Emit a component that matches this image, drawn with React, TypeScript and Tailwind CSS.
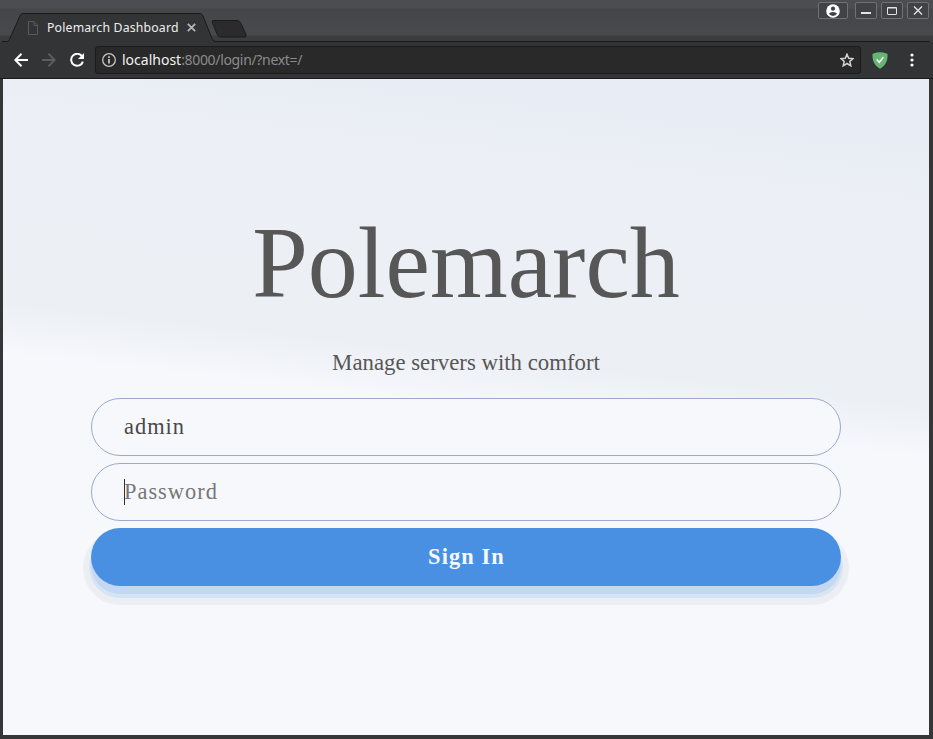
import React from "react";

function TabStrip() {
  return (
    <header className="relative flex h-[42px] shrink-0 items-start justify-between bg-[linear-gradient(180deg,#4c4d50_0,#4c4d50_8px,#454649_9px,#48494c_35px,#3b3c3e_36px,#3b3c3e_40px)]">
      <div className="relative flex h-[42px] w-[216px] items-center pl-[27px] pt-[13px]">
        <svg className="absolute left-0 top-[12px]" width="250" height="30" viewBox="0 0 250 30">
          <path d="M2 29.5H7.5C9.5 28 10 27 11 24L20 4C21 2 21.5 1.5 23 1.5H199C201 1.5 202 2 203 4L211 24C212 27 213 29 216 29.5V30H2Z" fill="#333436" />
          <path d="M2 29.5H7.5C9.5 28 10 27 11 24L20 4C21 2 21.5 1.5 23 1.5H199C201 1.5 202 2 203 4L211 24C212 27 213 29 215 29.5" fill="none" stroke="#19191a" />
          <path d="M214 8.500H237C239 8.500 240 9.500 241 11.500L246 22.500C246.500 24.500 246 25 244 25H221C219 25 218 24 217 22L212.500 11C211.800 9 212 8.500 214 8.500Z" fill="#2b2b2d" stroke="#1b1b1c" />
        </svg>
        <svg className="relative" width="12" height="14" viewBox="0 0 12 14" fill="none" stroke="#5a5a5c">
          <path d="M1.500 .5H7L10.500 4V13.500H1.500ZM7 .5V4.500H10.500" />
        </svg>
        <span className="relative ml-[8px] w-[134px] whitespace-nowrap font-['Noto_Sans',sans-serif] text-[12.300px] leading-[16px] tracking-[0.160px] text-[#eeeeee]">Polemarch Dashboard</span>
        <svg className="relative ml-[6px]" width="9" height="9" viewBox="0 0 9 9" stroke="#b4b4b6" strokeWidth="1.800">
          <path d="M.8 .8L8.200 8.200M8.200 .8L.8 8.200" />
        </svg>
      </div>
      <div className="absolute bottom-0 left-[215px] right-[3px] h-px bg-[#19191a]" />
      <div className="flex gap-[5px] pr-[4px] pt-[2px]">
        <button className="mr-[2px] flex h-[17px] w-[30px] items-center justify-center rounded-[2px] border border-[#707173] bg-[#414245]">
          <svg width="14" height="14" viewBox="0 0 14 14">
            <circle cx="7" cy="7" r="6.800" fill="#fff" />
            <circle cx="7" cy="4.700" r="2.100" fill="#414245" />
            <path d="M2.900 9.800Q4 7.900 7 7.900T11.100 9.800Q9.700 11.900 7 11.900T2.900 9.800Z" fill="#414245" />
          </svg>
        </button>
        <button className="flex h-[17px] w-[22px] items-center justify-center rounded-[2px] border border-[#707173] bg-[#414245]">
          <svg width="12" height="13" viewBox="0 0 12 13"><rect x="1" y="8" width="10" height="2" fill="#e3e3e3" /></svg>
        </button>
        <button className="-ml-px flex h-[17px] w-[22px] items-center justify-center rounded-[2px] border border-[#707173] bg-[#414245]">
          <svg width="12" height="13" viewBox="0 0 12 13"><rect x="1.500" y="3.500" width="9" height="7" rx=".5" fill="none" stroke="#e3e3e3" /><path d="M1 4H11" stroke="#e3e3e3" /></svg>
        </button>
        <button className="-ml-px flex h-[17px] w-[22px] items-center justify-center rounded-[2px] border border-[#707173] bg-[#414245]">
          <svg width="10" height="11" viewBox="0 0 10 11" stroke="#e3e3e3" strokeWidth="1.400"><path d="M1 1.500L9 9.500M9 1.500L1 9.500" /></svg>
        </button>
      </div>
    </header>
  );
}

function Toolbar() {
  return (
    <nav className="flex h-[37px] shrink-0 items-center border-b border-[#19191a] bg-[#333436] pl-[14px] pr-[15px]">
      <svg width="14" height="14" viewBox="0 0 14 14" fill="none" stroke="#fff" strokeWidth="2"><path d="M14 7H1.500M7.500 .8L1.300 7L7.500 13.200" /></svg>
      <svg className="ml-[14px]" width="14" height="14" viewBox="0 0 14 14" fill="none" stroke="#5c5d5f" strokeWidth="2"><path d="M0 7H12.500M6.500 .8L12.700 7L6.500 13.200" /></svg>
      <svg className="ml-[14px]" width="14" height="14" viewBox="0 0 14 14"><path d="M12.200 3.500A6 6 0 1 0 12.900 8.600" fill="none" stroke="#fff" strokeWidth="2" /><path d="M14 0V6H8Z" fill="#fff" /></svg>
      <div className="ml-[11px] flex h-[28px] flex-1 items-center rounded-[3px] border border-[#1b1b1c] bg-[#292929] pl-[6px] pr-[6px]">
        <svg width="14" height="14" viewBox="0 0 14 14"><circle cx="7" cy="7" r="6.300" fill="none" stroke="#c6c6c8" strokeWidth="1.300" /><path d="M7 6V10.500M7 3.300V4.900" stroke="#d5d5d5" strokeWidth="1.600" /></svg>
        <span className="ml-[6px] flex-1 font-['Noto_Sans',sans-serif] text-[14px] leading-[18px] tracking-[-0.330px] text-[#8b8b8d]"><span className="tracking-normal text-[#f1f1f1]">localhost</span>:8000/login/?next=/</span>
        <svg width="14" height="14" viewBox="0 0 14 14" fill="none" stroke="#d2d2d4" strokeWidth="1.500"><path d="M7 1.200L8.700 5.200L13.100 5.600L9.800 8.400L10.800 12.800L7 10.500L3.200 12.800L4.200 8.400L.9 5.600L5.300 5.200Z" /></svg>
      </div>
      <svg className="ml-[11px]" width="16" height="17" viewBox="0 0 16 17"><path d="M8 .3C10.500 .3 13.600 .8 15.500 2C15.700 8.500 14.300 12.800 8 16.700C1.700 12.800 .3 8.500 .5 2C2.400 .8 5.500 .3 8 .3Z" fill="#65b671" /><path d="M4.700 7.500L7.300 10.200L11.300 5.300" fill="none" stroke="#fff" strokeWidth="1.600" /></svg>
      <svg className="ml-[22px] mr-[4px]" width="4" height="14" viewBox="0 0 4 14" fill="#fff"><circle cx="2" cy="2" r="1.600" /><circle cx="2" cy="7" r="1.600" /><circle cx="2" cy="12" r="1.600" /></svg>
    </nav>
  );
}

export default function App() {
  return (
    <div className="flex h-[739px] w-[933px] flex-col overflow-hidden bg-[#353638]">
      <TabStrip />
      <Toolbar />
      <div className="flex h-[660px] border-b-[4px] border-l-[3px] border-r-[4px] border-[#353638]">
        <main className="flex h-[656px] w-[926px] flex-col items-center bg-[linear-gradient(186.5deg,#e8edf5_0%,#e8edf5_9%,#eceff5_17%,#eceff4_43%,#f6f8fc_50%)] font-['Liberation_Serif',serif]">
          <h1 className="mt-[127px] origin-[50%_80%] scale-y-[1.025] text-[100px] leading-[115px] text-[#575757]">Polemarch</h1>
          <p className="mt-[29px] text-[22.800px] leading-[26px] text-[#575757]">Manage servers with comfort</p>
          <form className="mt-[22px] flex w-[750px] flex-col gap-[7px]" onSubmit={(e) => e.preventDefault()}>
            <div className="flex h-[58px] items-center rounded-full border border-[#9aa9d0] bg-[#f6f8fc] pl-[32px] text-[22.400px] tracking-[1px] text-[#494949]">admin</div>
            <div className="flex h-[58px] items-center rounded-full border border-[#9aa9d0] bg-[#f6f8fc] pl-[32px] text-[22.400px] tracking-[1px] text-[#777777]">
              <span className="h-[26px] w-px bg-[#303030]" />
              <span className="-ml-px">Password</span>
            </div>
            <button className="h-[58px] rounded-full bg-[#4990e2] pl-px text-[22.400px] font-bold tracking-[1.100px] text-[#f6f8fc] shadow-[0_8px_0_0px_#c5d8f1,0_10px_0_2px_#d6e4f4,0_11px_0_8px_#ebeff4]">Sign In</button>
          </form>
        </main>
      </div>
    </div>
  );
}
